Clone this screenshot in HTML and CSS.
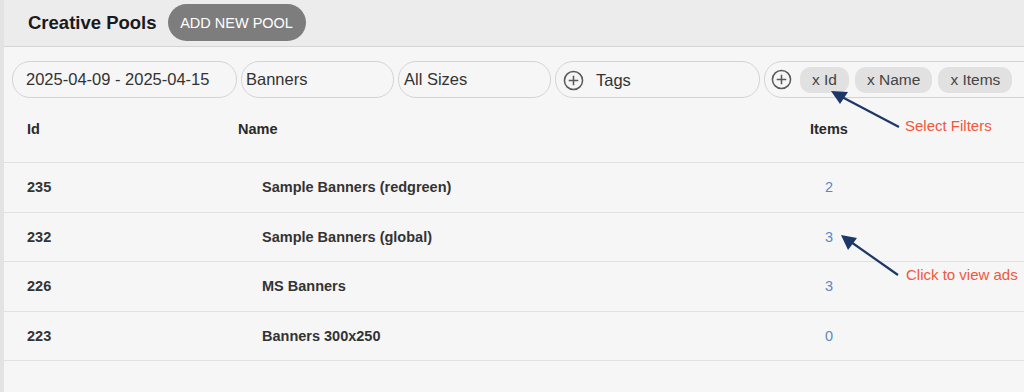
FILE: index.html
```html
<!DOCTYPE html>
<html>
<head>
<meta charset="utf-8">
<link rel="stylesheet" href="styles.css">
</head>
<body>
<div class="page">
  <header class="topbar">
    <h1 class="title">Creative Pools</h1>
    <button class="btn-add">ADD NEW POOL</button>
  </header>

  <div class="filters">
    <div class="field field-date">2025-04-09 - 2025-04-15</div>
    <div class="field field-type">Banners</div>
    <div class="field field-size">All Sizes</div>
    <div class="field field-tags">
      <svg class="plus" viewBox="0 0 22 22" width="21" height="21"><circle cx="11" cy="11" r="9.5" fill="none" stroke="#5a5a5a" stroke-width="1.6"/><path d="M11 6v10M6 11h10" stroke="#5a5a5a" stroke-width="1.6"/></svg>
      <span>Tags</span>
    </div>
    <div class="field field-cols">
      <svg class="plus" viewBox="0 0 22 22" width="21" height="21"><circle cx="11" cy="11" r="9.5" fill="none" stroke="#5a5a5a" stroke-width="1.6"/><path d="M11 6v10M6 11h10" stroke="#5a5a5a" stroke-width="1.6"/></svg>
      <span class="chip">x Id</span>
      <span class="chip">x Name</span>
      <span class="chip">x Items</span>
    </div>
  </div>

  <div class="table">
    <div class="row head">
      <div class="c-id">Id</div>
      <div class="c-name">Name</div>
      <div class="c-items">Items</div>
    </div>
    <div class="row">
      <div class="c-id">235</div>
      <div class="c-name">Sample Banners (redgreen)</div>
      <div class="c-items"><a>2</a></div>
    </div>
    <div class="row">
      <div class="c-id">232</div>
      <div class="c-name">Sample Banners (global)</div>
      <div class="c-items"><a>3</a></div>
    </div>
    <div class="row">
      <div class="c-id">226</div>
      <div class="c-name">MS Banners</div>
      <div class="c-items"><a>3</a></div>
    </div>
    <div class="row">
      <div class="c-id">223</div>
      <div class="c-name">Banners 300x250</div>
      <div class="c-items"><a>0</a></div>
    </div>
  </div>

  <svg class="arrows" width="1024" height="392" viewBox="0 0 1024 392">
    <line x1="899" y1="127" x2="842" y2="97" stroke="#1d3766" stroke-width="2.2"/>
    <polygon points="831,91 848,92 840,104" fill="#1d3766"/>
    <line x1="898" y1="275" x2="851" y2="242" stroke="#1d3766" stroke-width="2.2"/>
    <polygon points="841,235 857,238 848,250" fill="#1d3766"/>
  </svg>
  <div class="note note-filters">Select Filters</div>
  <div class="note note-ads">Click to view ads</div>
</div>
</body>
</html>
```
FILE: styles.css
```css
* { box-sizing: border-box; }
html, body { margin: 0; padding: 0; }
body {
  background: #f6f6f6;
  font-family: "Liberation Sans", Arial, Helvetica, sans-serif;
  color: #333;
  overflow: hidden;
  width: 1024px;
  height: 392px;
}
.page {
  position: relative;
  height: 392px;
  border-left: 4px solid #e3e3e3;
}
.topbar {
  display: flex;
  align-items: center;
  gap: 11px;
  height: 47px;
  padding: 0 0 1px 24px;
  background: #ececec;
  border-bottom: 1px solid #d5d5d5;
}
.title {
  margin: 0;
  font-size: 18.5px;
  font-weight: bold;
  color: #1a1a1a;
}
.btn-add {
  height: 37px;
  width: 138px;
  border: none;
  border-radius: 19px;
  background: #7d7d7d;
  color: #fff;
  font-family: inherit;
  font-size: 14.5px;
  padding: 0;
}
.filters {
  display: flex;
  gap: 4px;
  padding: 14px 0 0 8px;
  height: 51px;
}
.field {
  flex: none;
  display: flex;
  align-items: center;
  height: 37px;
  border: 1px solid #d4d4d4;
  border-radius: 18px;
  background: #f6f6f6;
  font-size: 16.5px;
  color: #333;
  white-space: nowrap;
}
.field-date { width: 225px; padding-left: 13px; }
.field-type { width: 153px; padding-left: 4px; }
.field-size { width: 153px; padding-left: 5px; }
.field-tags { width: 205px; padding-left: 7px; gap: 12px; padding-top: 2px; }
.field-cols { width: 290px; padding-left: 6px; gap: 6px; }
.field-cols .plus { margin-right: 2px; }
.plus { flex: none; display: block; }
.chip {
  display: inline-flex;
  align-items: center;
  height: 26px;
  padding: 0 12px;
  border-radius: 11px;
  background: #e1e1e1;
  color: #444;
  font-size: 15.5px;
}
.table {
  display: flex;
  flex-direction: column;
}
.row {
  display: grid;
  grid-template-columns: 211px 572px 1fr;
  align-items: center;
  height: 49.5px;
  padding-left: 23px;
  border-bottom: 1.5px solid #e1e1e1;
  font-size: 14.5px;
  font-weight: bold;
  color: #333;
}
.row.head {
  height: 65px;
  color: #2a2a2a;
  padding-bottom: 3px;
}
.row .c-name { padding-left: 24px; }
.row.head .c-name { padding-left: 0; }
.c-items a { padding-left: 15px; font-weight: normal; color: #5f88bf; }
.arrows {
  position: absolute;
  left: -4px;
  top: 0;
  pointer-events: none;
}
.note {
  position: absolute;
  font-size: 15px;
  color: #f0583c;
  white-space: nowrap;
}
.note-filters { left: 901px; top: 117px; }
.note-ads { left: 902px; top: 266px; }
```
